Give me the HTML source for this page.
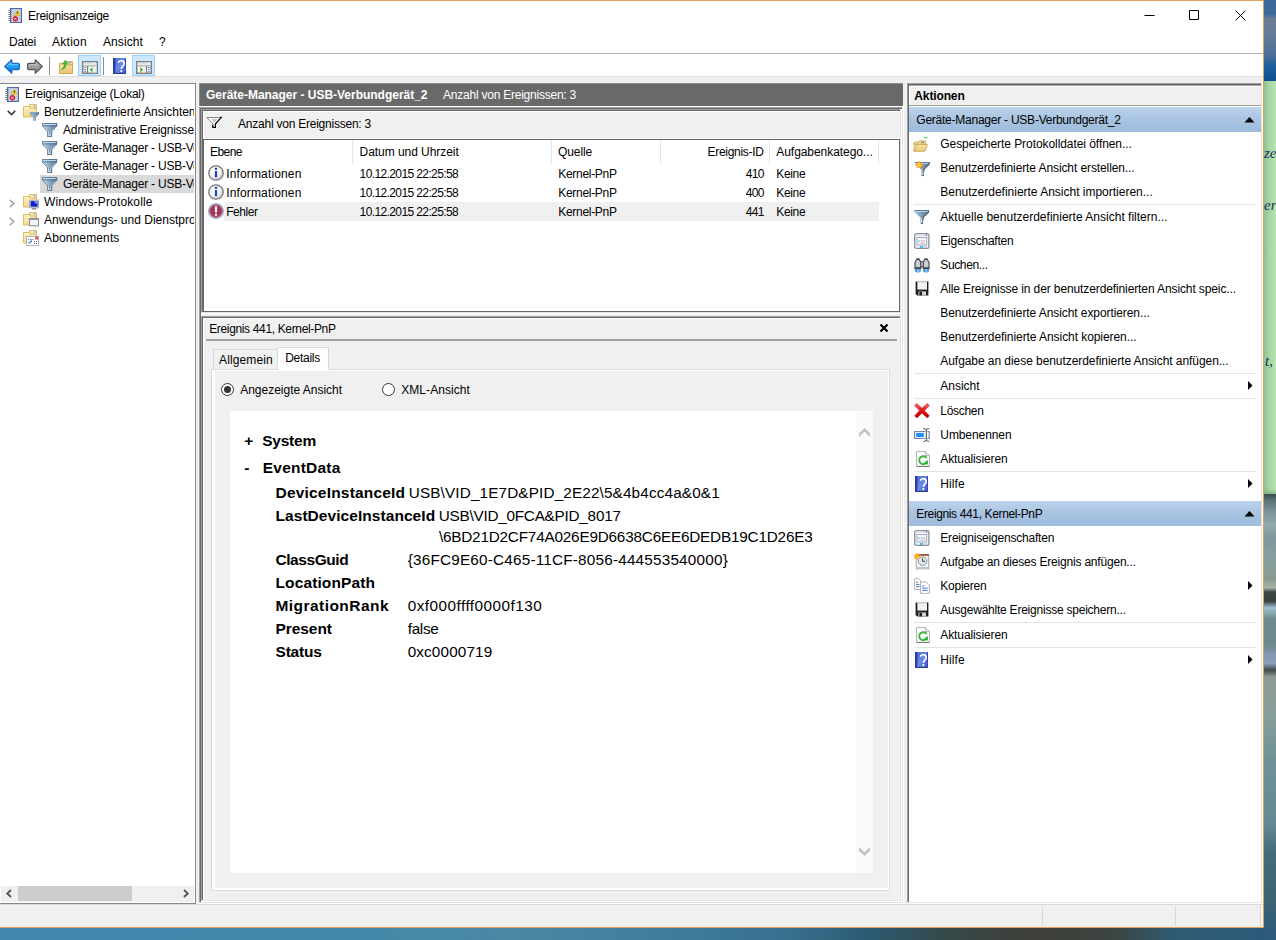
<!DOCTYPE html>
<html lang="de"><head><meta charset="utf-8"><title>Ereignisanzeige</title>
<style>
html,body{margin:0;padding:0}
body{width:1276px;height:940px;overflow:hidden;position:relative;background:#fff;font-family:'Liberation Sans',sans-serif;font-size:12px;color:#000}
body>div,body>svg{position:absolute;display:block}
.t{white-space:pre;line-height:20px;height:20px}
</style></head>
<body>
<div style="left:0px;top:0px;width:1276px;height:940px;background:#4787aa;"></div>
<div style="left:0px;top:928px;width:1276px;height:12px;background:linear-gradient(90deg,#3f88ac 0%,#4289ab 25%,#4a88a4 40%,#3f7d9c 52%,#386f8e 62%,#2b5b72 68%,#36494a 74%,#3f3f38 81%,#3c4440 87%,#2f5a72 92%,#2b5a7a 100%);"></div>
<div style="left:1264px;top:0px;width:12px;height:81px;background:linear-gradient(180deg,#3c6a9a 0%,#3a6898 17%,#6c7d96 24%,#647a96 45%,#4d6e98 68%,#20609e 80%,#0e4f90 100%);"></div>
<div style="left:1264px;top:81px;width:12px;height:413px;background:linear-gradient(90deg,#8fbf94 0%,#a6d4a2 40%,#b8e6b0 100%);"></div>
<div style="left:1264px;top:489px;width:12px;height:5px;background:linear-gradient(180deg,rgba(120,170,120,0) 0%,rgba(110,160,115,0.6) 100%);"></div>
<div style="left:1264px;top:494px;width:12px;height:446px;background:linear-gradient(180deg,#3a4a48 0%,#5c7478 1.5%,#7a9498 4%,#93aaac 7%,#7d979b 10%,#86a0a0 14%,#8a9a90 19%,#a8b4a8 21%,#3c4444 22%,#3a4040 24%,#a0c0d0 25.5%,#6f8a8c 28%,#6f8a8c 34%,#8498b4 36%,#8a9cb8 38%,#424a4a 39.5%,#909a98 41%,#8c9c98 44%,#869e9a 50%,#6e9096 60%,#6a8c94 68%,#668a94 74%,#456c7c 80%,#3a6272 92%,#2c5a7c 100%);"></div>
<div class="t" style="left:1264px;top:143px;font-size:15px;color:#1c2c5c;font-family:'Liberation Serif',serif;font-style:italic;">ze</div>
<div class="t" style="left:1264px;top:195px;font-size:15px;color:#1c2c5c;font-family:'Liberation Serif',serif;font-style:italic;">er</div>
<div class="t" style="left:1265px;top:351px;font-size:15px;color:#1c2c5c;font-family:'Liberation Serif',serif;font-style:italic;">t,</div>
<div style="left:0px;top:0px;width:1264px;height:928px;background:#dfa254;"></div>
<div style="left:0px;top:1px;width:1263px;height:926px;background:#f0f0f0;"></div>
<div style="left:0px;top:1px;width:1263px;height:52px;background:#fff;"></div>
<div style="left:0px;top:53px;width:1263px;height:1px;background:#b5b5b5;"></div>
<div style="left:0px;top:54px;width:1263px;height:22px;background:#fff;"></div>
<div style="left:0px;top:76px;width:1263px;height:1px;background:#dfdfdf;"></div>
<div class="t" style="left:28px;top:6px;font-size:12px;letter-spacing:-0.293px;">Ereignisanzeige</div>
<svg style="left:1140px;top:5px" width="115" height="20" viewBox="0 0 115 20"><path d="M4.5 10.5h10M49.5 5.5h9v9h-9zM95.5 5.5l10 10M105.5 5.5l-10 10" fill="none" stroke="#000" stroke-width="1"/></svg>
<div class="t" style="left:9px;top:32px;font-size:12px;letter-spacing:-0.203px;">Datei</div>
<div class="t" style="left:52px;top:32px;font-size:12px;letter-spacing:0.273px;">Aktion</div>
<div class="t" style="left:103px;top:32px;font-size:12px;letter-spacing:0.092px;">Ansicht</div>
<div class="t" style="left:159px;top:32px;font-size:12px;letter-spacing:-0.688px;">?</div>
<div style="left:0px;top:83px;width:196px;height:821px;background:#828790;"></div>
<div style="left:0px;top:84px;width:195px;height:819px;background:#fff;"></div>
<div style="left:40px;top:175px;width:154px;height:18px;background:#d9d9d9;"></div>
<div class="t" style="left:25px;top:84px;font-size:12px;letter-spacing:-0.257px;">Ereignisanzeige (Lokal)</div>
<div class="t" style="left:44px;top:102px;font-size:12px;letter-spacing:-0.048px;width:150px;overflow:hidden;">Benutzerdefinierte Ansichten</div>
<div class="t" style="left:63px;top:120px;font-size:12px;letter-spacing:-0.149px;width:131px;overflow:hidden;">Administrative Ereignisse</div>
<div class="t" style="left:63px;top:138px;font-size:12px;letter-spacing:-0.218px;width:131px;overflow:hidden;">Geräte-Manager - USB-Verbundgerät</div>
<div class="t" style="left:63px;top:156px;font-size:12px;letter-spacing:-0.218px;width:131px;overflow:hidden;">Geräte-Manager - USB-Verbundgerät</div>
<div class="t" style="left:63px;top:174px;font-size:12px;letter-spacing:-0.218px;width:131px;overflow:hidden;">Geräte-Manager - USB-Verbundgerät</div>
<div class="t" style="left:44px;top:192px;font-size:12px;letter-spacing:0.142px;">Windows-Protokolle</div>
<div class="t" style="left:44px;top:210px;font-size:12px;letter-spacing:0.01px;width:150px;overflow:hidden;">Anwendungs- und Dienstprotokolle</div>
<div class="t" style="left:44px;top:228px;font-size:12px;letter-spacing:0.131px;">Abonnements</div>
<div style="left:1px;top:886px;width:193px;height:16px;background:#f0f0f0;"></div>
<div style="left:18px;top:886px;width:114px;height:15px;background:#cdcdcd;"></div>
<svg style="left:5px;top:889px" width="9" height="9" viewBox="0 0 9 9"><path d="M6 1L2.2 4.5L6 8" fill="none" stroke="#555" stroke-width="1.8"/></svg>
<svg style="left:181px;top:889px" width="9" height="9" viewBox="0 0 9 9"><path d="M3 1L6.8 4.5L3 8" fill="none" stroke="#555" stroke-width="1.8"/></svg>
<div style="left:199px;top:83px;width:704px;height:23px;background:#696969;"></div>
<div style="left:199px;top:83px;width:1px;height:23px;background:#8c8c8c;"></div>
<div style="left:199px;top:83px;width:704px;height:1px;background:#8c8c8c;"></div>
<div class="t" style="left:206px;top:85px;font-size:12px;font-weight:bold;color:#fff;letter-spacing:-0.016px;">Geräte-Manager - USB-Verbundgerät_2</div>
<div class="t" style="left:443px;top:85px;font-size:12px;color:#fff;letter-spacing:-0.23px;">Anzahl von Ereignissen: 3</div>
<div style="left:199px;top:106px;width:705px;height:1px;background:#fff;"></div>
<div style="left:199px;top:107px;width:705px;height:797px;background:#fff;"></div>
<div style="left:199px;top:107px;width:704px;height:796px;background:#e3e3e3;"></div>
<div style="left:199px;top:107px;width:703px;height:795px;background:#a0a0a0;"></div>
<div style="left:200px;top:108px;width:702px;height:794px;background:#696969;"></div>
<div style="left:201px;top:109px;width:701px;height:793px;background:#f0f0f0;"></div>
<div style="left:201px;top:109px;width:701px;height:205px;background:#fff;"></div>
<div style="left:201px;top:109px;width:700px;height:204px;background:#e3e3e3;"></div>
<div style="left:201px;top:109px;width:699px;height:203px;background:#a0a0a0;"></div>
<div style="left:202px;top:110px;width:698px;height:202px;background:#696969;"></div>
<div style="left:203px;top:111px;width:697px;height:201px;background:#f0f0f0;"></div>
<div style="left:201px;top:316px;width:701px;height:586px;background:#fff;"></div>
<div style="left:201px;top:316px;width:700px;height:585px;background:#e3e3e3;"></div>
<div style="left:201px;top:316px;width:699px;height:584px;background:#a0a0a0;"></div>
<div style="left:202px;top:317px;width:698px;height:583px;background:#696969;"></div>
<div style="left:203px;top:318px;width:697px;height:582px;background:#f0f0f0;"></div>
<div style="left:203px;top:318px;width:697px;height:1px;background:#fff;"></div>
<div style="left:203px;top:318px;width:1px;height:582px;background:#fff;"></div>
<div style="left:203px;top:111px;width:697px;height:28px;background:#fff;"></div>
<div style="left:204px;top:112px;width:696px;height:26px;background:#f0f0f0;"></div>
<div class="t" style="left:238px;top:114px;font-size:12px;letter-spacing:-0.23px;">Anzahl von Ereignissen: 3</div>
<div style="left:203px;top:139px;width:697px;height:173px;background:#696969;"></div>
<div style="left:204px;top:140px;width:695px;height:171px;background:#fff;"></div>
<div style="left:352px;top:140px;width:1px;height:24px;background:#e5e5e5;"></div>
<div style="left:551px;top:140px;width:1px;height:24px;background:#e5e5e5;"></div>
<div style="left:660px;top:140px;width:1px;height:24px;background:#e5e5e5;"></div>
<div style="left:769px;top:140px;width:1px;height:24px;background:#e5e5e5;"></div>
<div style="left:878px;top:140px;width:1px;height:24px;background:#e5e5e5;"></div>
<div class="t" style="left:210px;top:142px;font-size:12px;letter-spacing:-0.541px;">Ebene</div>
<div class="t" style="left:359.6px;top:142px;font-size:12px;letter-spacing:-0.056px;">Datum und Uhrzeit</div>
<div class="t" style="left:558px;top:142px;font-size:12px;letter-spacing:-0.081px;">Quelle</div>
<div class="t" style="left:707.5px;top:142px;font-size:12px;letter-spacing:-0.287px;">Ereignis-ID</div>
<div class="t" style="left:776.3px;top:142px;font-size:12px;letter-spacing:-0.06px;">Aufgabenkatego...</div>
<div style="left:224px;top:202px;width:655px;height:19px;background:#f0f0f0;"></div>
<div class="t" style="left:226.2px;top:164px;font-size:12px;letter-spacing:0.147px;">Informationen</div>
<div class="t" style="left:359.6px;top:164px;font-size:12px;letter-spacing:-0.611px;">10.12.2015 22:25:58</div>
<div class="t" style="left:558.3px;top:164px;font-size:12px;letter-spacing:-0.307px;">Kernel-PnP</div>
<div class="t" style="left:745.8px;top:164px;font-size:12px;letter-spacing:-0.71px;">410</div>
<div class="t" style="left:776.3px;top:164px;font-size:12px;letter-spacing:-0.341px;">Keine</div>
<div class="t" style="left:226.2px;top:183px;font-size:12px;letter-spacing:0.147px;">Informationen</div>
<div class="t" style="left:359.6px;top:183px;font-size:12px;letter-spacing:-0.611px;">10.12.2015 22:25:58</div>
<div class="t" style="left:558.3px;top:183px;font-size:12px;letter-spacing:-0.307px;">Kernel-PnP</div>
<div class="t" style="left:745.8px;top:183px;font-size:12px;letter-spacing:-0.71px;">400</div>
<div class="t" style="left:776.3px;top:183px;font-size:12px;letter-spacing:-0.341px;">Keine</div>
<div class="t" style="left:226.2px;top:202px;font-size:12px;letter-spacing:-0.419px;">Fehler</div>
<div class="t" style="left:359.6px;top:202px;font-size:12px;letter-spacing:-0.611px;">10.12.2015 22:25:58</div>
<div class="t" style="left:558.3px;top:202px;font-size:12px;letter-spacing:-0.307px;">Kernel-PnP</div>
<div class="t" style="left:745.8px;top:202px;font-size:12px;letter-spacing:-0.71px;">441</div>
<div class="t" style="left:776.3px;top:202px;font-size:12px;letter-spacing:-0.341px;">Keine</div>
<div class="t" style="left:209.2px;top:319px;font-size:12px;letter-spacing:-0.348px;">Ereignis 441, Kernel-PnP</div>
<svg style="left:879px;top:323px" width="10" height="10" viewBox="0 0 10 10"><path d="M1.5 1.5L8.5 8.5M8.5 1.5L1.5 8.5" stroke="#000" stroke-width="2.2" fill="none"/></svg>
<div style="left:206px;top:339px;width:691px;height:2px;background:#a0a0a0;"></div>
<div style="left:213px;top:349px;width:65px;height:21px;background:#d9d9d9;"></div>
<div style="left:214px;top:350px;width:63px;height:20px;background:#f0f0f0;"></div>
<div class="t" style="left:219px;top:350px;font-size:12px;letter-spacing:0.122px;">Allgemein</div>
<div style="left:211px;top:369px;width:679px;height:522px;background:#dcdcdc;"></div>
<div style="left:212px;top:370px;width:677px;height:520px;background:#fff;"></div>
<div style="left:215px;top:371px;width:673px;height:517px;background:#f0f0f0;"></div>
<div style="left:277px;top:347px;width:52px;height:23px;background:#d9d9d9;"></div>
<div style="left:278px;top:348px;width:50px;height:23px;background:#fff;"></div>
<div class="t" style="left:285.2px;top:348px;font-size:12px;letter-spacing:-0.27px;">Details</div>
<svg style="left:220px;top:382px" width="15" height="15" viewBox="0 0 15 15"><circle cx="7.5" cy="7.5" r="6" fill="#fff" stroke="#333" stroke-width="1"/><circle cx="7.5" cy="7.5" r="3.5" fill="#333"/></svg>
<div class="t" style="left:240.2px;top:380px;font-size:12px;letter-spacing:-0.01px;">Angezeigte Ansicht</div>
<svg style="left:381px;top:382px" width="15" height="15" viewBox="0 0 15 15"><circle cx="7.5" cy="7.5" r="6" fill="#fff" stroke="#333" stroke-width="1"/></svg>
<div class="t" style="left:401.2px;top:380px;font-size:12px;letter-spacing:0.07px;">XML-Ansicht</div>
<div style="left:230px;top:411px;width:643px;height:462px;background:#fff;"></div>
<div style="left:856px;top:411px;width:17px;height:462px;background:#fafafa;"></div>
<svg style="left:858px;top:426px" width="13" height="12" viewBox="0 0 13 12"><path d="M1 7.3L6.5 2L12 7.3V11L6.5 5.8L1 11z" fill="#c2c2c2"/></svg>
<svg style="left:858px;top:845px" width="13" height="12" viewBox="0 0 13 12"><path d="M1 2L6.5 7.2L12 2V5.7L6.5 11L1 5.7z" fill="#c2c2c2"/></svg>
<div class="t" style="left:244.3px;top:431px;font-size:15.5px;font-weight:bold;letter-spacing:-0.763px;">+</div>
<div class="t" style="left:262.2px;top:431px;font-size:15.5px;font-weight:bold;letter-spacing:-0.226px;">System</div>
<div class="t" style="left:244.3px;top:458px;font-size:15.5px;font-weight:bold;letter-spacing:-1.072px;">-</div>
<div class="t" style="left:262.8px;top:458px;font-size:15.5px;font-weight:bold;letter-spacing:0.21px;">EventData</div>
<div class="t" style="left:275.5px;top:483px;font-size:15.5px;font-weight:bold;letter-spacing:0.196px;">DeviceInstanceId</div>
<div class="t" style="left:408.7px;top:483px;font-size:15.3px;letter-spacing:0.142px;">USB\VID_1E7D&amp;PID_2E22\5&amp;4b4cc4a&amp;0&amp;1</div>
<div class="t" style="left:275.5px;top:506px;font-size:15.5px;font-weight:bold;letter-spacing:0.059px;">LastDeviceInstanceId</div>
<div class="t" style="left:438.7px;top:506px;font-size:15.3px;letter-spacing:-0.241px;">USB\VID_0FCA&amp;PID_8017</div>
<div class="t" style="left:438.9px;top:527px;font-size:15.3px;letter-spacing:-0.2px;">\6BD21D2CF74A026E9D6638C6EE6DEDB19C1D26E3</div>
<div class="t" style="left:275.5px;top:550px;font-size:15.5px;font-weight:bold;letter-spacing:-0.441px;">ClassGuid</div>
<div class="t" style="left:407.7px;top:550px;font-size:15.3px;letter-spacing:0.2px;">{36FC9E60-C465-11CF-8056-444553540000}</div>
<div class="t" style="left:275.5px;top:573px;font-size:15.5px;font-weight:bold;letter-spacing:0.119px;">LocationPath</div>
<div class="t" style="left:275.5px;top:596px;font-size:15.5px;font-weight:bold;letter-spacing:0.45px;">MigrationRank</div>
<div class="t" style="left:407.7px;top:596px;font-size:15.3px;letter-spacing:0.477px;">0xf000ffff0000f130</div>
<div class="t" style="left:275.5px;top:619px;font-size:15.5px;font-weight:bold;letter-spacing:-0.068px;">Present</div>
<div class="t" style="left:407.7px;top:619px;font-size:15.3px;letter-spacing:-0.302px;">false</div>
<div class="t" style="left:275.5px;top:642px;font-size:15.5px;font-weight:bold;letter-spacing:-0.196px;">Status</div>
<div class="t" style="left:407.7px;top:642px;font-size:15.3px;letter-spacing:0.124px;">0xc0000719</div>
<div style="left:907px;top:83px;width:356px;height:821px;background:#fff;"></div>
<div style="left:907px;top:83px;width:355px;height:820px;background:#e3e3e3;"></div>
<div style="left:907px;top:83px;width:354px;height:819px;background:#a0a0a0;"></div>
<div style="left:908px;top:84px;width:353px;height:818px;background:#696969;"></div>
<div style="left:909px;top:85px;width:352px;height:817px;background:#a0a0a0;"></div>
<div style="left:909px;top:86px;width:352px;height:816px;background:#fff;"></div>
<div style="left:910px;top:87px;width:351px;height:18px;background:#f0f0f0;"></div>
<div style="left:909px;top:105px;width:352px;height:1px;background:#a0a0a0;"></div>
<div class="t" style="left:914.3px;top:86px;font-size:12px;font-weight:bold;letter-spacing:-0.13px;">Aktionen</div>
<div style="left:909px;top:107px;width:352px;height:25px;background:linear-gradient(180deg,#bcd3ea 0%,#a9c4e2 50%,#9dbbdc 100%);"></div>
<div class="t" style="left:916.3px;top:110px;font-size:12px;letter-spacing:-0.24px;">Geräte-Manager - USB-Verbundgerät_2</div>
<svg style="left:1244px;top:116px" width="11" height="7" viewBox="0 0 11 7"><path d="M0.5 6.5L5.5 1L10.5 6.5z" fill="#000"/></svg>
<div class="t" style="left:940.3px;top:134px;font-size:12px;letter-spacing:-0.065px;">Gespeicherte Protokolldatei öffnen...</div>
<div class="t" style="left:940.3px;top:158px;font-size:12px;letter-spacing:-0.098px;">Benutzerdefinierte Ansicht erstellen...</div>
<div class="t" style="left:940.3px;top:182px;font-size:12px;letter-spacing:-0.009px;">Benutzerdefinierte Ansicht importieren...</div>
<div class="t" style="left:940.3px;top:207px;font-size:12px;letter-spacing:0.009px;">Aktuelle benutzerdefinierte Ansicht filtern...</div>
<div class="t" style="left:940.3px;top:231px;font-size:12px;letter-spacing:-0.22px;">Eigenschaften</div>
<div class="t" style="left:940.3px;top:255px;font-size:12px;letter-spacing:-0.378px;">Suchen...</div>
<div class="t" style="left:940.3px;top:279px;font-size:12px;letter-spacing:-0.11px;">Alle Ereignisse in der benutzerdefinierten Ansicht speic...</div>
<div class="t" style="left:940.3px;top:303px;font-size:12px;letter-spacing:-0.083px;">Benutzerdefinierte Ansicht exportieren...</div>
<div class="t" style="left:940.3px;top:327px;font-size:12px;letter-spacing:-0.068px;">Benutzerdefinierte Ansicht kopieren...</div>
<div class="t" style="left:940.3px;top:351px;font-size:12px;letter-spacing:-0.06px;">Aufgabe an diese benutzerdefinierte Ansicht anfügen...</div>
<div class="t" style="left:940.3px;top:376px;font-size:12px;letter-spacing:-0.008px;">Ansicht</div>
<div class="t" style="left:940.3px;top:401px;font-size:12px;letter-spacing:-0.311px;">Löschen</div>
<div class="t" style="left:940.3px;top:425px;font-size:12px;letter-spacing:-0.086px;">Umbenennen</div>
<div class="t" style="left:940.3px;top:449px;font-size:12px;letter-spacing:-0.108px;">Aktualisieren</div>
<div class="t" style="left:940.3px;top:474px;font-size:12px;letter-spacing:0.097px;">Hilfe</div>
<div class="t" style="left:940.3px;top:528px;font-size:12px;letter-spacing:-0.199px;">Ereigniseigenschaften</div>
<div class="t" style="left:940.3px;top:552px;font-size:12px;letter-spacing:-0.198px;">Aufgabe an dieses Ereignis anfügen...</div>
<div class="t" style="left:940.3px;top:576px;font-size:12px;letter-spacing:-0.243px;">Kopieren</div>
<div class="t" style="left:940.3px;top:600px;font-size:12px;letter-spacing:-0.227px;">Ausgewählte Ereignisse speichern...</div>
<div class="t" style="left:940.3px;top:625px;font-size:12px;letter-spacing:-0.108px;">Aktualisieren</div>
<div class="t" style="left:940.3px;top:650px;font-size:12px;letter-spacing:0.097px;">Hilfe</div>
<div style="left:914px;top:204px;width:342px;height:1px;background:#e3e3e3;"></div>
<div style="left:914px;top:373px;width:342px;height:1px;background:#e3e3e3;"></div>
<div style="left:914px;top:398px;width:342px;height:1px;background:#e3e3e3;"></div>
<div style="left:914px;top:471px;width:342px;height:1px;background:#e3e3e3;"></div>
<div style="left:914px;top:622px;width:342px;height:1px;background:#e3e3e3;"></div>
<div style="left:914px;top:647px;width:342px;height:1px;background:#e3e3e3;"></div>
<svg style="left:1248px;top:381px" width="5" height="9" viewBox="0 0 5 9"><path d="M0 0L4.5 4.5L0 9z" fill="#000"/></svg>
<svg style="left:1248px;top:479px" width="5" height="9" viewBox="0 0 5 9"><path d="M0 0L4.5 4.5L0 9z" fill="#000"/></svg>
<svg style="left:1248px;top:581px" width="5" height="9" viewBox="0 0 5 9"><path d="M0 0L4.5 4.5L0 9z" fill="#000"/></svg>
<svg style="left:1248px;top:655px" width="5" height="9" viewBox="0 0 5 9"><path d="M0 0L4.5 4.5L0 9z" fill="#000"/></svg>
<div style="left:909px;top:501px;width:352px;height:25px;background:linear-gradient(180deg,#bcd3ea 0%,#a9c4e2 50%,#9dbbdc 100%);"></div>
<div class="t" style="left:916.3px;top:504px;font-size:12px;letter-spacing:-0.365px;">Ereignis 441, Kernel-PnP</div>
<svg style="left:1244px;top:510px" width="11" height="7" viewBox="0 0 11 7"><path d="M0.5 6.5L5.5 1L10.5 6.5z" fill="#000"/></svg>
<div style="left:0px;top:904px;width:1263px;height:1px;background:#d9d9d9;"></div>
<div style="left:1042px;top:906px;width:1px;height:20px;background:#d7d7d7;"></div>
<div style="left:1175px;top:906px;width:1px;height:20px;background:#d7d7d7;"></div>
<div style="left:1260px;top:906px;width:1px;height:20px;background:#d7d7d7;"></div>
<div style="left:1261px;top:905px;width:2px;height:22px;background:#f6f6f6;"></div>
<svg style="left:8px;top:8px" width="16" height="16" viewBox="0 0 16 16"><rect x="2.6" y="0.6" width="10.8" height="13.8" fill="#d3e0f4" stroke="#5566a6" stroke-width="1.2"/><path d="M4 3.5h8M4 5.5h8M4 7.5h8M4 9.5h8M4 11.5h8" stroke="#a9c1e6" stroke-width="1"/><path d="M0.5 2.5h3M0.5 4.5h3M0.5 6.5h3M0.5 8.5h3M0.5 10.5h3M0.5 12.5h3" stroke="#707070" stroke-width="1.1"/><path d="M9.3 2L12.4 7.3H6.2z" fill="#f7d321" stroke="#d9a400" stroke-width="0.5"/><path d="M9.3 3.8v2" stroke="#222" stroke-width="1"/><circle cx="7.4" cy="10.7" r="2.7" fill="#d8232a"/><path d="M6.4 9.7l2 2M8.4 9.7l-2 2" stroke="#fff" stroke-width="0.9"/></svg>
<svg style="left:5px;top:87px" width="16" height="16" viewBox="0 0 16 16"><rect x="2.6" y="0.6" width="10.8" height="13.8" fill="#d3e0f4" stroke="#5566a6" stroke-width="1.2"/><path d="M4 3.5h8M4 5.5h8M4 7.5h8M4 9.5h8M4 11.5h8" stroke="#a9c1e6" stroke-width="1"/><path d="M0.5 2.5h3M0.5 4.5h3M0.5 6.5h3M0.5 8.5h3M0.5 10.5h3M0.5 12.5h3" stroke="#707070" stroke-width="1.1"/><path d="M9.3 2L12.4 7.3H6.2z" fill="#f7d321" stroke="#d9a400" stroke-width="0.5"/><path d="M9.3 3.8v2" stroke="#222" stroke-width="1"/><circle cx="7.4" cy="10.7" r="2.7" fill="#d8232a"/><path d="M6.4 9.7l2 2M8.4 9.7l-2 2" stroke="#fff" stroke-width="0.9"/></svg>
<svg style="left:4px;top:59px" width="16" height="15" viewBox="0 0 16 15"><defs><linearGradient id="g1" x1="0" y1="0" x2="0" y2="1"><stop offset="0" stop-color="#52c6fc"/><stop offset="0.5" stop-color="#1fa2f2"/><stop offset="1" stop-color="#0b66cc"/></linearGradient></defs><path d="M0.7 7.5L7.8 0.8V4.4H14.2Q15.4 4.4 15.4 5.6V9.4Q15.4 10.6 14.2 10.6H7.8V14.2z" fill="url(#g1)" stroke="#1867b8" stroke-width="1.2" stroke-linejoin="round"/><path d="M3 7.3L7 3.6V5.4H13.6" stroke="#8ad8ff" stroke-width="0.9" fill="none" opacity="0.8"/></svg>
<svg style="left:27px;top:59px" width="16" height="15" viewBox="0 0 16 15"><defs><linearGradient id="g2" x1="0" y1="0" x2="0" y2="1"><stop offset="0" stop-color="#bdbdbd"/><stop offset="0.5" stop-color="#a0a0a0"/><stop offset="1" stop-color="#858585"/></linearGradient></defs><path d="M15.3 7.5L8.2 0.8V4.4H1.8Q0.6 4.4 0.6 5.6V9.4Q0.6 10.6 1.8 10.6H8.2V14.2z" fill="url(#g2)" stroke="#555" stroke-width="1.2" stroke-linejoin="round"/><path d="M2 5.6H9V3.4" stroke="#d0d0d0" stroke-width="0.8" fill="none" opacity="0.8"/></svg>
<div style="left:49px;top:57px;width:1px;height:18px;background:#8c8c8c;"></div>
<svg style="left:59px;top:60px" width="14" height="14" viewBox="0 0 14 14"><defs><linearGradient id="g3" x1="0" y1="0" x2="0" y2="1"><stop offset="0" stop-color="#f7e3a1"/><stop offset="1" stop-color="#e7c46c"/></linearGradient></defs><path d="M6 1.5h7.5v4H6z" fill="#f3dc95" stroke="#cfa851" stroke-width="0.8"/><rect x="9.5" y="2.2" width="2.6" height="1" fill="#5aa0e8"/><path d="M0.5 3.5h6.5l1 1.3h5.5v8.7h-13z" fill="url(#g3)" stroke="#c9a24a" stroke-width="0.9"/><path d="M2.2 9.6C4.4 8.6 5.4 6.4 5.2 3.6L3.4 4.2L6.2 0.2L8.8 3.6L7.2 3.5C7.4 6.8 5.4 9.4 2.2 9.6z" fill="#3fc23a" stroke="#2a9a28" stroke-width="0.5"/></svg>
<div style="left:78px;top:55px;width:23px;height:21px;background:#cce8ff;box-sizing:border-box;border:1px solid #99d1ff"></div>
<svg style="left:82px;top:61px" width="16" height="13" viewBox="0 0 16 13"><rect x="0.75" y="0.75" width="14.5" height="11.5" fill="#fff" stroke="#7f7f7f" stroke-width="1.5"/><rect x="1.5" y="1.5" width="13" height="1.6" fill="#dcdcdc"/><rect x="11" y="1.6" width="1" height="1.2" fill="#fff"/><rect x="13" y="1.6" width="1" height="1.2" fill="#fff"/><rect x="1.5" y="3.1" width="13" height="1.4" fill="#e6e6e6"/><rect x="1.5" y="4.5" width="13" height="0.9" fill="#8f8f8f"/><rect x="5" y="5" width="1.2" height="7" fill="#7f7f7f"/><path d="M2.3 6.6h2M2.3 8.6h2M2.3 10.6h2" stroke="#3b78c8" stroke-width="0.9"/><path d="M10.6 6.1v5.2L7.6 8.7z" fill="#35b52a"/><rect x="12" y="5.4" width="2.5" height="6" fill="#ececec"/></svg>
<div style="left:103px;top:57px;width:1px;height:18px;background:#8c8c8c;"></div>
<svg style="left:113px;top:58px" width="13" height="16" viewBox="0 0 13 16"><defs><linearGradient id="g4" x1="0" y1="0" x2="1" y2="1"><stop offset="0" stop-color="#4a66d0"/><stop offset="0.5" stop-color="#6b8ae8"/><stop offset="1" stop-color="#3550c0"/></linearGradient></defs><rect x="0" y="0" width="13" height="16" fill="url(#g4)"/><rect x="0" y="0" width="2.4" height="16" fill="#2a3fa4"/><rect x="0" y="15" width="13" height="1" fill="#27388f"/><rect x="12" y="0" width="1" height="16" fill="#3046b0"/><path d="M5.46 4.8C5.46 1.92 11.44 1.92 11.18 5.76C11.049999999999999 8.0 8.32 8.32 8.32 10.88" stroke="#fff" stroke-width="1.6" fill="none"/><circle cx="8.32" cy="13.12" r="1.15" fill="#fff"/></svg>
<div style="left:132px;top:55px;width:23px;height:21px;background:#cce8ff;box-sizing:border-box;border:1px solid #99d1ff"></div>
<svg style="left:136px;top:61px" width="16" height="13" viewBox="0 0 16 13"><rect x="0.75" y="0.75" width="14.5" height="11.5" fill="#fff" stroke="#7f7f7f" stroke-width="1.5"/><rect x="1.5" y="1.5" width="13" height="1.6" fill="#dcdcdc"/><rect x="11" y="1.6" width="1" height="1.2" fill="#fff"/><rect x="13" y="1.6" width="1" height="1.2" fill="#fff"/><rect x="1.5" y="3.1" width="13" height="1.4" fill="#e6e6e6"/><rect x="1.5" y="4.5" width="13" height="0.9" fill="#8f8f8f"/><rect x="9.8" y="5" width="1.2" height="7" fill="#7f7f7f"/><path d="M11.8 6.6h2M11.8 8.6h2M11.8 10.6h2" stroke="#3b78c8" stroke-width="0.9"/><path d="M4.2 6.1v5.2L7.2 8.7z" fill="#35b52a"/><rect x="6.9" y="5.4" width="2.8" height="6" fill="#ececec"/></svg>
<svg style="left:7px;top:110px" width="9" height="6" viewBox="0 0 9 6"><path d="M0.8 0.8L4.5 4.6L8.2 0.8" fill="none" stroke="#404040" stroke-width="1.7"/></svg>
<svg style="left:23px;top:104px" width="17" height="17" viewBox="0 0 17 17"><defs><linearGradient id="g5" x1="0" y1="0" x2="0" y2="1"><stop offset="0" stop-color="#fdf0c2"/><stop offset="1" stop-color="#f2d88a"/></linearGradient></defs><path d="M6.5 0.6h7v5h-7z" fill="#f6e2a3" stroke="#d2ab55" stroke-width="0.8"/><rect x="8.3" y="1.4" width="2.3" height="1" fill="#fff"/><rect x="10.6" y="1.4" width="1.6" height="1" fill="#4f96e6"/><path d="M0.5 2.5h5.8l1.2 1.6h5.5v8.9h-12.5z" fill="url(#g5)" stroke="#d9b45c" stroke-width="0.9"/><g transform="translate(7 8) scale(0.6)"><defs><linearGradient id="g6" x1="0" y1="0" x2="1" y2="0"><stop offset="0" stop-color="#c4d6e5"/><stop offset="0.45" stop-color="#8fabc2"/><stop offset="1" stop-color="#5b7993"/></linearGradient></defs><path d="M0 0H15V3.2L10 8.7V14H5V8.7L0 3.2z" fill="#55728c"/><path d="M0.8 0.8H14.2V2.9L9.2 8.4V13.2H5.8V8.4L0.8 2.9z" fill="url(#g6)"/><path d="M1.2 1.5H13.8" stroke="#b9dcf6" stroke-width="1"/><path d="M0.6 2.9H14.4" stroke="#4f6a83" stroke-width="0.8"/><path d="M1.6 3.8L6.2 8.7V12.8M13.4 3.8L8.8 8.7" stroke="#dbe8f2" stroke-width="0.7" fill="none" opacity="0.85"/><path d="M6.3 8.8H8.7V12.9H6.3z" fill="#c9dcec"/><path d="M7.5 8.6V11.6" stroke="#6888a2" stroke-width="1.1"/></g></svg>
<svg style="left:42px;top:123px" width="16" height="15" viewBox="0 0 16 15"><g transform="translate(0.2 0) scale(1)"><defs><linearGradient id="g7" x1="0" y1="0" x2="1" y2="0"><stop offset="0" stop-color="#c4d6e5"/><stop offset="0.45" stop-color="#8fabc2"/><stop offset="1" stop-color="#5b7993"/></linearGradient></defs><path d="M0 0H15V3.2L10 8.7V14H5V8.7L0 3.2z" fill="#55728c"/><path d="M0.8 0.8H14.2V2.9L9.2 8.4V13.2H5.8V8.4L0.8 2.9z" fill="url(#g7)"/><path d="M1.2 1.5H13.8" stroke="#b9dcf6" stroke-width="1"/><path d="M0.6 2.9H14.4" stroke="#4f6a83" stroke-width="0.8"/><path d="M1.6 3.8L6.2 8.7V12.8M13.4 3.8L8.8 8.7" stroke="#dbe8f2" stroke-width="0.7" fill="none" opacity="0.85"/><path d="M6.3 8.8H8.7V12.9H6.3z" fill="#c9dcec"/><path d="M7.5 8.6V11.6" stroke="#6888a2" stroke-width="1.1"/></g></svg>
<svg style="left:42px;top:141px" width="16" height="15" viewBox="0 0 16 15"><g transform="translate(0.2 0) scale(1)"><defs><linearGradient id="g8" x1="0" y1="0" x2="1" y2="0"><stop offset="0" stop-color="#c4d6e5"/><stop offset="0.45" stop-color="#8fabc2"/><stop offset="1" stop-color="#5b7993"/></linearGradient></defs><path d="M0 0H15V3.2L10 8.7V14H5V8.7L0 3.2z" fill="#55728c"/><path d="M0.8 0.8H14.2V2.9L9.2 8.4V13.2H5.8V8.4L0.8 2.9z" fill="url(#g8)"/><path d="M1.2 1.5H13.8" stroke="#b9dcf6" stroke-width="1"/><path d="M0.6 2.9H14.4" stroke="#4f6a83" stroke-width="0.8"/><path d="M1.6 3.8L6.2 8.7V12.8M13.4 3.8L8.8 8.7" stroke="#dbe8f2" stroke-width="0.7" fill="none" opacity="0.85"/><path d="M6.3 8.8H8.7V12.9H6.3z" fill="#c9dcec"/><path d="M7.5 8.6V11.6" stroke="#6888a2" stroke-width="1.1"/></g></svg>
<svg style="left:42px;top:159px" width="16" height="15" viewBox="0 0 16 15"><g transform="translate(0.2 0) scale(1)"><defs><linearGradient id="g9" x1="0" y1="0" x2="1" y2="0"><stop offset="0" stop-color="#c4d6e5"/><stop offset="0.45" stop-color="#8fabc2"/><stop offset="1" stop-color="#5b7993"/></linearGradient></defs><path d="M0 0H15V3.2L10 8.7V14H5V8.7L0 3.2z" fill="#55728c"/><path d="M0.8 0.8H14.2V2.9L9.2 8.4V13.2H5.8V8.4L0.8 2.9z" fill="url(#g9)"/><path d="M1.2 1.5H13.8" stroke="#b9dcf6" stroke-width="1"/><path d="M0.6 2.9H14.4" stroke="#4f6a83" stroke-width="0.8"/><path d="M1.6 3.8L6.2 8.7V12.8M13.4 3.8L8.8 8.7" stroke="#dbe8f2" stroke-width="0.7" fill="none" opacity="0.85"/><path d="M6.3 8.8H8.7V12.9H6.3z" fill="#c9dcec"/><path d="M7.5 8.6V11.6" stroke="#6888a2" stroke-width="1.1"/></g></svg>
<svg style="left:42px;top:177px" width="16" height="15" viewBox="0 0 16 15"><g transform="translate(0.2 0) scale(1)"><defs><linearGradient id="g10" x1="0" y1="0" x2="1" y2="0"><stop offset="0" stop-color="#c4d6e5"/><stop offset="0.45" stop-color="#8fabc2"/><stop offset="1" stop-color="#5b7993"/></linearGradient></defs><path d="M0 0H15V3.2L10 8.7V14H5V8.7L0 3.2z" fill="#55728c"/><path d="M0.8 0.8H14.2V2.9L9.2 8.4V13.2H5.8V8.4L0.8 2.9z" fill="url(#g10)"/><path d="M1.2 1.5H13.8" stroke="#b9dcf6" stroke-width="1"/><path d="M0.6 2.9H14.4" stroke="#4f6a83" stroke-width="0.8"/><path d="M1.6 3.8L6.2 8.7V12.8M13.4 3.8L8.8 8.7" stroke="#dbe8f2" stroke-width="0.7" fill="none" opacity="0.85"/><path d="M6.3 8.8H8.7V12.9H6.3z" fill="#c9dcec"/><path d="M7.5 8.6V11.6" stroke="#6888a2" stroke-width="1.1"/></g></svg>
<svg style="left:9px;top:199px" width="6" height="9" viewBox="0 0 6 9"><path d="M0.8 0.8L4.8 4.5L0.8 8.2" fill="none" stroke="#a6a6a6" stroke-width="1.6"/></svg>
<svg style="left:9px;top:217px" width="6" height="9" viewBox="0 0 6 9"><path d="M0.8 0.8L4.8 4.5L0.8 8.2" fill="none" stroke="#a6a6a6" stroke-width="1.6"/></svg>
<svg style="left:23px;top:194px" width="17" height="17" viewBox="0 0 17 17"><defs><linearGradient id="g11" x1="0" y1="0" x2="0" y2="1"><stop offset="0" stop-color="#fdf0c2"/><stop offset="1" stop-color="#f2d88a"/></linearGradient></defs><path d="M6.5 0.6h7v5h-7z" fill="#f6e2a3" stroke="#d2ab55" stroke-width="0.8"/><rect x="8.3" y="1.4" width="2.3" height="1" fill="#fff"/><rect x="10.6" y="1.4" width="1.6" height="1" fill="#4f96e6"/><path d="M0.5 2.5h5.8l1.2 1.6h5.5v8.9h-12.5z" fill="url(#g11)" stroke="#d9b45c" stroke-width="0.9"/><rect x="6.6" y="6.2" width="9" height="7.6" fill="#d8dde6" stroke="#9aa3b5" stroke-width="0.8"/><rect x="7.6" y="7.1" width="7" height="5.6" fill="#1020c8"/><path d="M11 7.1h3.6v3.2C12.6 10.3 11.4 9 11 7.1z" fill="#6f8af0"/><path d="M8.6 15.4h5l-0.8-1.3h-3.4z" fill="#8d8d8d"/></svg>
<svg style="left:23px;top:212px" width="17" height="17" viewBox="0 0 17 17"><defs><linearGradient id="g12" x1="0" y1="0" x2="0" y2="1"><stop offset="0" stop-color="#fdf0c2"/><stop offset="1" stop-color="#f2d88a"/></linearGradient></defs><path d="M6.5 0.6h7v5h-7z" fill="#f6e2a3" stroke="#d2ab55" stroke-width="0.8"/><rect x="8.3" y="1.4" width="2.3" height="1" fill="#fff"/><rect x="10.6" y="1.4" width="1.6" height="1" fill="#4f96e6"/><path d="M0.5 2.5h5.8l1.2 1.6h5.5v8.9h-12.5z" fill="url(#g12)" stroke="#d9b45c" stroke-width="0.9"/><rect x="6.5" y="6.6" width="9" height="7.2" fill="#f4f4f6" stroke="#8a90a2" stroke-width="1.1"/><rect x="6.5" y="6.3" width="9" height="1.6" fill="#8a90a2"/></svg>
<svg style="left:23px;top:230px" width="17" height="17" viewBox="0 0 17 17"><defs><linearGradient id="g13" x1="0" y1="0" x2="0" y2="1"><stop offset="0" stop-color="#fdf0c2"/><stop offset="1" stop-color="#f2d88a"/></linearGradient></defs><path d="M6.5 0.6h7v5h-7z" fill="#f6e2a3" stroke="#d2ab55" stroke-width="0.8"/><rect x="8.3" y="1.4" width="2.3" height="1" fill="#fff"/><rect x="10.6" y="1.4" width="1.6" height="1" fill="#4f96e6"/><path d="M0.5 2.5h5.8l1.2 1.6h5.5v8.9h-12.5z" fill="url(#g13)" stroke="#d9b45c" stroke-width="0.9"/><rect x="3.5" y="6.4" width="12" height="9" fill="#fff" stroke="#a8a8a8" stroke-width="0.9"/><rect x="12.2" y="6.9" width="2.9" height="2.6" fill="#f04848"/><path d="M5.2 9.5h1M7.4 9.5h1.3M9.6 9.5h1M11 11.5h1M13 11.5h1M11 13.5h1M13 13.5h1M8 11.5h1" stroke="#3c6fc4" stroke-width="1"/><path d="M5.2 11.8l1.3 1.6l2-3" stroke="#2c62c0" stroke-width="1" fill="none"/></svg>
<svg style="left:206px;top:116px" width="17" height="13" viewBox="0 0 17 13"><path d="M0.8 1.2H15.6L9.6 8.2V11.2H7V8.2z" fill="#fff" stroke="#fff" stroke-width="2"/><path d="M5.5 3h6l-3.2 4z" fill="#c4c4c4"/><path d="M0.8 1.5H14.6" stroke="#808080" stroke-width="1.1"/><path d="M1 1.8L7.2 8.2" stroke="#8a8a8a" stroke-width="1"/><path d="M15.4 1.2L9.4 8V11.3H6.8V8.6" stroke="#000" stroke-width="1.2" fill="none"/><circle cx="15.3" cy="1.4" r="0.8" fill="#000"/></svg>
<svg style="left:208px;top:165px" width="16" height="16" viewBox="0 0 16 16"><defs><radialGradient id="g14" cx="0.4" cy="0.35" r="0.75"><stop offset="0" stop-color="#fff"/><stop offset="0.55" stop-color="#efefef"/><stop offset="1" stop-color="#b9b9b9"/></radialGradient></defs><circle cx="8" cy="8" r="7.2" fill="url(#g14)" stroke="#747474" stroke-width="1.3"/><rect x="6.9" y="6" width="2.2" height="6.2" fill="#1845b8"/><rect x="6.9" y="2.9" width="2.2" height="1.9" fill="#12319a"/></svg>
<svg style="left:208px;top:184px" width="16" height="16" viewBox="0 0 16 16"><defs><radialGradient id="g15" cx="0.4" cy="0.35" r="0.75"><stop offset="0" stop-color="#fff"/><stop offset="0.55" stop-color="#efefef"/><stop offset="1" stop-color="#b9b9b9"/></radialGradient></defs><circle cx="8" cy="8" r="7.2" fill="url(#g15)" stroke="#747474" stroke-width="1.3"/><rect x="6.9" y="6" width="2.2" height="6.2" fill="#1845b8"/><rect x="6.9" y="2.9" width="2.2" height="1.9" fill="#12319a"/></svg>
<svg style="left:208px;top:203px" width="16" height="16" viewBox="0 0 16 16"><circle cx="8" cy="8" r="7.2" fill="#a63453" stroke="#9db5cd" stroke-width="1.7"/><circle cx="8" cy="8" r="6" fill="none" stroke="#c0556f" stroke-width="0.8"/><rect x="6.9" y="3.2" width="2.2" height="6.4" fill="#e9f7fb"/><rect x="6.9" y="10.8" width="2.2" height="2" fill="#e9f7fb"/></svg>
<svg style="left:913px;top:137.4px" width="17" height="16" viewBox="0 0 17 16"><defs><linearGradient id="g16" x1="0" y1="0" x2="0" y2="1"><stop offset="0" stop-color="#f9e7ad"/><stop offset="1" stop-color="#e9c873"/></linearGradient></defs><rect x="10.8" y="0.3" width="4" height="0.9" fill="#35d235"/><path d="M1 6Q1 5 2.2 5H5.5l1-1.2H11.5Q12.6 3.8 12.6 5V7.4H1z" fill="#eed68f" stroke="#c6a252" stroke-width="0.8"/><rect x="8.2" y="4.8" width="2.6" height="1.2" fill="#4f96e6"/><path d="M3.6 7.4H14.4L11.8 14.2H0.8z" fill="url(#g16)" stroke="#c8a452" stroke-width="0.9"/><path d="M1 6v7.4" stroke="#c6a252" stroke-width="0.8"/></svg>
<svg style="left:914px;top:161px" width="17" height="16" viewBox="0 0 17 16"><g transform="translate(1 1) scale(1)"><defs><linearGradient id="g17" x1="0" y1="0" x2="1" y2="0"><stop offset="0" stop-color="#a9c3d8"/><stop offset="0.5" stop-color="#7f9cb5"/><stop offset="1" stop-color="#4d6a84"/></linearGradient></defs><path d="M0 0H15V2L9 7.6V13.2Q7.6 14.4 6.3 13.2V7.6L0 2z" fill="url(#g17)"/><path d="M0.3 0.5H14.7" stroke="#5d7a94" stroke-width="1"/><path d="M1 1.5H13.6" stroke="#cfe2f0" stroke-width="0.8"/><path d="M14.6 2L9 7.4V9.5" stroke="#3c4c5c" stroke-width="1" fill="none"/><path d="M7 8V13" stroke="#d8e6f0" stroke-width="0.9"/><path d="M6.6 13.6H8.8" stroke="#44586c" stroke-width="0.9"/></g><path d="M4.8 0.2L6 2.1L8.4 1.4L7.4 3.5L9.4 5L7 5.4L6.4 7.8L4.8 6L2.6 7L3.2 4.7L1 3.6L3.3 3z" fill="#ffa81a" stroke="#f08c00" stroke-width="0.4"/><circle cx="5" cy="3.8" r="1.7" fill="#ffd23e"/></svg>
<svg style="left:914px;top:210px" width="16" height="15" viewBox="0 0 16 15"><g transform="translate(0.2 0) scale(1)"><defs><linearGradient id="g18" x1="0" y1="0" x2="1" y2="0"><stop offset="0" stop-color="#a9c3d8"/><stop offset="0.5" stop-color="#7f9cb5"/><stop offset="1" stop-color="#4d6a84"/></linearGradient></defs><path d="M0 0H15V2L9 7.6V13.2Q7.6 14.4 6.3 13.2V7.6L0 2z" fill="url(#g18)"/><path d="M0.3 0.5H14.7" stroke="#5d7a94" stroke-width="1"/><path d="M1 1.5H13.6" stroke="#cfe2f0" stroke-width="0.8"/><path d="M14.6 2L9 7.4V9.5" stroke="#3c4c5c" stroke-width="1" fill="none"/><path d="M7 8V13" stroke="#d8e6f0" stroke-width="0.9"/><path d="M6.6 13.6H8.8" stroke="#44586c" stroke-width="0.9"/></g></svg>
<svg style="left:914px;top:233px" width="16" height="16" viewBox="0 0 16 16"><rect x="0.7" y="0.7" width="14.2" height="14.6" rx="1.6" fill="#f2f5f9" stroke="#8a8f9c" stroke-width="1.3"/><rect x="1.6" y="1.5" width="12.4" height="1.5" fill="#dfe4ec"/><rect x="11.5" y="1.2" width="1.6" height="1.3" fill="#5a78c8"/><rect x="3" y="4.5" width="9.6" height="7.6" fill="#fff" stroke="#a5abc0" stroke-width="1"/><path d="M6.2 5.6h2M9.3 5.6h2" stroke="#e8ebf2" stroke-width="1"/><rect x="4.3" y="7.4" width="1.3" height="1.3" fill="#1ba6ff"/><rect x="4.5" y="9.7" width="1" height="1" fill="#b5b5b5"/><path d="M6.4 8h4.8M6.4 10.2h4.8" stroke="#a8a8a8" stroke-width="1"/><rect x="6" y="13.2" width="3.2" height="1.5" fill="#18b4f5"/><rect x="10.4" y="13.4" width="2.6" height="1.1" fill="#c5c5c5"/></svg>
<svg style="left:914px;top:257px" width="16" height="16" viewBox="0 0 16 16"><path d="M1 11V5.5L2.6 2.5H5.4L6.8 5.5V11z" fill="#c9ced3" stroke="#4a525b" stroke-width="1.2"/><path d="M9.2 11V5.5L10.6 2.5H13.4L15 5.5V11z" fill="#c9ced3" stroke="#4a525b" stroke-width="1.2"/><rect x="6.6" y="4.6" width="2.8" height="5" fill="#aeb5bb" stroke="#4a525b" stroke-width="1"/><rect x="2.6" y="1.2" width="2.8" height="1.6" fill="#4a525b"/><rect x="10.6" y="1.2" width="2.8" height="1.6" fill="#4a525b"/><rect x="0.6" y="10.4" width="6.6" height="2" fill="#3e464f"/><rect x="8.8" y="10.4" width="6.6" height="2" fill="#3e464f"/><path d="M1 12.4h5.8v1.8Q3.9 16.6 1 14.2z" fill="#2b8fe8"/><path d="M9.2 12.4h5.8v1.8Q12.1 16.6 9.2 14.2z" fill="#2b8fe8"/><path d="M3.4 12.6l2.4 1.4l-2.4 1.2z" fill="#bfe4ff"/><path d="M11.6 12.6l2.4 1.4l-2.4 1.2z" fill="#bfe4ff"/></svg>
<svg style="left:915px;top:281px" width="14" height="15" viewBox="0 0 14 15"><path d="M0.6 0.6H13.4V14.4H2.2L0.6 13z" fill="#1e1e1e"/><rect x="2.4" y="0.6" width="9.6" height="8" fill="#f2f2f2"/><rect x="2.4" y="0.6" width="9.6" height="1" fill="#d5d5d5"/><rect x="3.4" y="10.4" width="7.6" height="4" fill="#d2d2d2"/><rect x="4.4" y="10.8" width="2.6" height="3.6" fill="#1e1e1e"/></svg>
<svg style="left:914px;top:403px" width="16" height="16" viewBox="0 0 16 16"><defs><linearGradient id="g19" x1="0" y1="0" x2="0" y2="1"><stop offset="0" stop-color="#ff6a6a"/><stop offset="0.45" stop-color="#e3141c"/><stop offset="1" stop-color="#b00006"/></linearGradient></defs><path d="M0.6 2.6L2.8 0.5L8 5.2L13.2 0.5L15.4 2.6L10.4 7.6L15.4 12.8L13.2 15L8 10.2L2.8 15L0.6 12.8L5.6 7.6z" fill="url(#g19)" stroke="#c4141a" stroke-width="0.5"/></svg>
<svg style="left:914px;top:428px" width="16" height="14" viewBox="0 0 16 14"><rect x="0.6" y="3.6" width="14.6" height="6.8" fill="#fff" stroke="#6f7fb5" stroke-width="1.1"/><rect x="2.2" y="5" width="7.6" height="4" fill="#1e8fff"/><rect x="11.3" y="2" width="2" height="10" fill="#fff"/><path d="M12.3 0.8V13.2M9.4 0.6Q12 0.6 12.3 1.8Q12.6 0.6 15.2 0.6M9.4 13.4Q12 13.4 12.3 12.2Q12.6 13.4 15.2 13.4" stroke="#4e4e4e" stroke-width="1" fill="none"/></svg>
<svg style="left:916px;top:451px" width="14" height="16" viewBox="0 0 14 16"><path d="M0.6 0.6H9.6L13.4 4.4V15.4H0.6z" fill="#fff" stroke="#a4a4a4" stroke-width="0.9"/><path d="M9.6 0.6V4.4H13.4" fill="#eee" stroke="#a4a4a4" stroke-width="0.8"/><path d="M0.6 15.6H13.4" stroke="#6a6a6a" stroke-width="0.9"/><path d="M10.2 11.8A4 4 0 1 1 10.6 7" fill="none" stroke="#3bb83b" stroke-width="2"/><path d="M7.4 12.6L12 13.4L11.6 8.8z" fill="#2fa92f"/></svg>
<svg style="left:915px;top:476px" width="13" height="16" viewBox="0 0 13 16"><defs><linearGradient id="g20" x1="0" y1="0" x2="1" y2="1"><stop offset="0" stop-color="#4a66d0"/><stop offset="0.5" stop-color="#6b8ae8"/><stop offset="1" stop-color="#3550c0"/></linearGradient></defs><rect x="0" y="0" width="13" height="16" fill="url(#g20)"/><rect x="0" y="0" width="2.4" height="16" fill="#2a3fa4"/><rect x="0" y="15" width="13" height="1" fill="#27388f"/><rect x="12" y="0" width="1" height="16" fill="#3046b0"/><path d="M5.46 4.8C5.46 1.92 11.44 1.92 11.18 5.76C11.049999999999999 8.0 8.32 8.32 8.32 10.88" stroke="#fff" stroke-width="1.6" fill="none"/><circle cx="8.32" cy="13.12" r="1.15" fill="#fff"/></svg>
<svg style="left:914px;top:530px" width="16" height="16" viewBox="0 0 16 16"><rect x="0.7" y="0.7" width="14.2" height="14.6" rx="1.6" fill="#f2f5f9" stroke="#8a8f9c" stroke-width="1.3"/><rect x="1.6" y="1.5" width="12.4" height="1.5" fill="#dfe4ec"/><rect x="11.5" y="1.2" width="1.6" height="1.3" fill="#5a78c8"/><rect x="3" y="4.5" width="9.6" height="7.6" fill="#fff" stroke="#a5abc0" stroke-width="1"/><path d="M6.2 5.6h2M9.3 5.6h2" stroke="#e8ebf2" stroke-width="1"/><rect x="4.3" y="7.4" width="1.3" height="1.3" fill="#1ba6ff"/><rect x="4.5" y="9.7" width="1" height="1" fill="#b5b5b5"/><path d="M6.4 8h4.8M6.4 10.2h4.8" stroke="#a8a8a8" stroke-width="1"/><rect x="6" y="13.2" width="3.2" height="1.5" fill="#18b4f5"/><rect x="10.4" y="13.4" width="2.6" height="1.1" fill="#c5c5c5"/></svg>
<svg style="left:914px;top:553px" width="17" height="17" viewBox="0 0 17 17"><rect x="2.2" y="1.6" width="12.6" height="14.2" fill="#f6f6f6" stroke="#9a9a9a" stroke-width="0.9"/><rect x="2.2" y="1.2" width="12.6" height="1.6" fill="#9a4a2c"/><rect x="2.2" y="14" width="12.6" height="1.8" fill="#c4c4c4"/><circle cx="8.6" cy="8.2" r="4.3" fill="#dbe6ee" stroke="#8e9aa5" stroke-width="1"/><path d="M8.6 5.4V8.3H11" stroke="#333" stroke-width="0.9" fill="none"/><path d="M2.6 -0.6L3.5 1.6L5.8 1L4.5 2.9L6.4 4.4L4 4.5L3.4 6.8L2 4.9L-0.2 5.6L1 3.6L-0.6 2L1.7 1.9z" fill="#ffb424" stroke="#f09000" stroke-width="0.4"/></svg>
<svg style="left:914px;top:578px" width="16" height="16" viewBox="0 0 16 16"><path d="M0.6 0.6H4.6L6.6 2.6V11.6H0.6z" fill="#fff" stroke="#a9a9a9" stroke-width="0.9"/><path d="M2 4.2h2M2 6.4h3.6M2 8.6h3.6" stroke="#3c78d0" stroke-width="1"/><path d="M6.6 4H12.2L15.4 7.2V15.4H6.6z" fill="#fff" stroke="#a9a9a9" stroke-width="0.9"/><path d="M8.2 8h2.2M8.2 10.2h5.6M8.2 12.4h5.6" stroke="#3c78d0" stroke-width="1"/></svg>
<svg style="left:915px;top:602px" width="14" height="15" viewBox="0 0 14 15"><path d="M0.6 0.6H13.4V14.4H2.2L0.6 13z" fill="#1e1e1e"/><rect x="2.4" y="0.6" width="9.6" height="8" fill="#f2f2f2"/><rect x="2.4" y="0.6" width="9.6" height="1" fill="#d5d5d5"/><rect x="3.4" y="10.4" width="7.6" height="4" fill="#d2d2d2"/><rect x="4.4" y="10.8" width="2.6" height="3.6" fill="#1e1e1e"/></svg>
<svg style="left:916px;top:627px" width="14" height="16" viewBox="0 0 14 16"><path d="M0.6 0.6H9.6L13.4 4.4V15.4H0.6z" fill="#fff" stroke="#a4a4a4" stroke-width="0.9"/><path d="M9.6 0.6V4.4H13.4" fill="#eee" stroke="#a4a4a4" stroke-width="0.8"/><path d="M0.6 15.6H13.4" stroke="#6a6a6a" stroke-width="0.9"/><path d="M10.2 11.8A4 4 0 1 1 10.6 7" fill="none" stroke="#3bb83b" stroke-width="2"/><path d="M7.4 12.6L12 13.4L11.6 8.8z" fill="#2fa92f"/></svg>
<svg style="left:915px;top:652px" width="13" height="16" viewBox="0 0 13 16"><defs><linearGradient id="g21" x1="0" y1="0" x2="1" y2="1"><stop offset="0" stop-color="#4a66d0"/><stop offset="0.5" stop-color="#6b8ae8"/><stop offset="1" stop-color="#3550c0"/></linearGradient></defs><rect x="0" y="0" width="13" height="16" fill="url(#g21)"/><rect x="0" y="0" width="2.4" height="16" fill="#2a3fa4"/><rect x="0" y="15" width="13" height="1" fill="#27388f"/><rect x="12" y="0" width="1" height="16" fill="#3046b0"/><path d="M5.46 4.8C5.46 1.92 11.44 1.92 11.18 5.76C11.049999999999999 8.0 8.32 8.32 8.32 10.88" stroke="#fff" stroke-width="1.6" fill="none"/><circle cx="8.32" cy="13.12" r="1.15" fill="#fff"/></svg>
</body></html>
